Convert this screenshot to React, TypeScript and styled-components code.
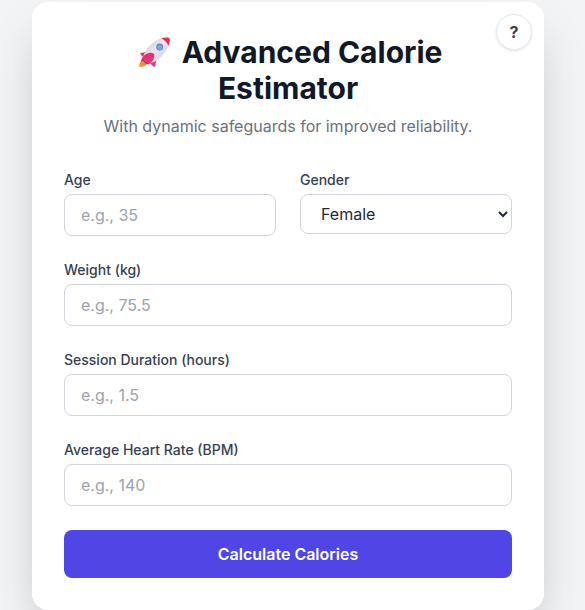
import React, { useState } from "react";
import styled, { createGlobalStyle } from "styled-components";

const GlobalStyle = createGlobalStyle`
  *, *::before, *::after { box-sizing: border-box; }
  body {
    margin: 0;
    background: #f3f4f6;
    font-family: Inter, sans-serif;
    font-size: 16px;
    line-height: 24px;
    color: #1f2937;
    overflow: hidden;
  }
`;

const Page = styled.main`
  height: 610px;
  padding: 2px 41px 0 32px;
  overflow: hidden;
`;

const Card = styled.section`
  position: relative;
  width: 512px;
  height: 608px;
  padding: 32px;
  background: #fff;
  border-radius: 16px;
  box-shadow: 0 25px 50px -12px rgba(0, 0, 0, 0.25);
`;

const HelpButton = styled.button`
  position: absolute;
  top: 12px;
  right: 12px;
  width: 36px;
  height: 36px;
  padding: 0;
  border: 1px solid #e5e7eb;
  border-radius: 50%;
  background: #fff;
  color: #374151;
  font: 700 16px/24px Inter, sans-serif;
  box-shadow: 0 1px 3px rgba(0, 0, 0, 0.1);
`;

const Header = styled.header`
  margin-bottom: 32px;
  text-align: center;
`;

const Title = styled.h1`
  margin: 0;
  font-size: 30px;
  line-height: 36px;
  font-weight: 700;
  color: #111827;
`;

const RocketIcon = styled.svg`
  width: 41px;
  height: 32px;
  vertical-align: -6px;
  margin-top: -4px;
`;

const Subtitle = styled.p`
  margin: 8px 0 0;
  color: #6b7280;
`;

const Form = styled.form`
  display: grid;
  gap: 24px;
`;

const Row = styled.div`
  display: grid;
  grid-template-columns: 1fr 1fr;
  gap: 24px;
  align-items: start;
`;

const Field = styled.label`
  display: flex;
  flex-direction: column;
  gap: 4px;
`;

const LabelText = styled.span`
  font-size: 14px;
  line-height: 20px;
  font-weight: 500;
  color: #374151;
`;

const Input = styled.input`
  width: 100%;
  height: 42px;
  padding: 8px 16px;
  border: 1px solid #d1d5db;
  border-radius: 8px;
  background: #fff;
  color: #1f2937;
  font: 400 16px/24px Inter, sans-serif;
  &::placeholder { color: #9ca3af; opacity: 1; }
`;

const Select = styled.select`
  width: 100%;
  height: 40px;
  padding: 8px 0 8px 16px;
  border: 1px solid #d1d5db;
  border-radius: 8px;
  background: #fff;
  color: #1f2937;
  font: 400 16px/24px Inter, sans-serif;
`;

const SubmitButton = styled.button`
  height: 48px;
  border: 0;
  border-radius: 8px;
  background: #4f46e5;
  color: #fff;
  font: 600 16px/24px Inter, sans-serif;
`;

function Rocket() {
  return (
    <RocketIcon viewBox="0 0 41 32" aria-label="Rocket">
      <defs>
        <linearGradient id="hull" x1="0.2" y1="0.2" x2="0.8" y2="0.8">
          <stop offset="0" stopColor="#d3d0d6" />
          <stop offset="0.45" stopColor="#eee6f0" />
          <stop offset="1" stopColor="#dccbe4" />
        </linearGradient>
        <linearGradient id="fin" x1="0" y1="0" x2="1" y2="1">
          <stop offset="0" stopColor="#dc3160" />
          <stop offset="1" stopColor="#f03585" />
        </linearGradient>
        <linearGradient id="flame" x1="1" y1="0" x2="0" y2="1">
          <stop offset="0" stopColor="#dd7436" />
          <stop offset="1" stopColor="#fba741" />
        </linearGradient>
      </defs>
      <path d="M9 23.300C6.500 23.500 5.200 25.800 5.100 29.200Q5.100 30 6 30C9.500 30 12.500 29 13 25.800Z" fill="url(#flame)" />
      <path d="M14.500 14.600L6.900 15.900Q5.600 16.400 6.600 17.300L9.500 20.500Z" fill="url(#fin)" />
      <path d="M22.500 21L21.300 28.800Q20.700 30.500 19.300 29.400L15.500 25.500Z" fill="url(#fin)" />
      <path d="M9.400 23C8 15 18.500 3.500 27.500 1.300C31 .4 34.500 .1 35.300 1C36.300 2 35.700 6 34.300 9.500C31.300 17 21.500 27 13.200 26.500Z" fill="url(#hull)" />
      <path d="M27.300 1.400C30.500 .4 34.500 .1 35.300 1C36.300 2 35.700 5.800 34.500 8.800C33.300 5.500 30.500 2.600 27.300 1.400Z" fill="#e23549" />
      <path d="M15.600 15.800C11.500 16.700 8.500 19.200 7 23.600Q7.200 25.200 9 24.300L11.600 23.500L11.600 26.200Q14.200 28.500 15.900 26.500C18.800 24.300 20.700 21.700 20.200 17.200Q18.500 15.400 15.600 15.800Z" fill="url(#fin)" />
      <path d="M9.200 23.300L12.900 26.500" stroke="#74435a" strokeWidth="1.200" strokeLinecap="round" />
      <circle cx="25.700" cy="10" r="3.500" fill="#6084b4" />
      <circle cx="25.800" cy="10.200" r="2.500" fill="#6faaf0" />
    </RocketIcon>
  );
}

const measurements = [
  { name: "weight", label: "Weight (kg)", placeholder: "e.g., 75.5" },
  { name: "duration", label: "Session Duration (hours)", placeholder: "e.g., 1.5" },
  { name: "heartRate", label: "Average Heart Rate (BPM)", placeholder: "e.g., 140" },
];

export default function App() {
  const [gender, setGender] = useState("female");
  return (
    <>
      <GlobalStyle />
      <Page>
        <Card>
          <HelpButton type="button">?</HelpButton>
          <Header>
            <Title><Rocket /> Advanced Calorie Estimator</Title>
            <Subtitle>With dynamic safeguards for improved reliability.</Subtitle>
          </Header>
          <Form onSubmit={(event) => event.preventDefault()}>
            <Row>
              <Field>
                <LabelText>Age</LabelText>
                <Input name="age" type="number" placeholder="e.g., 35" />
              </Field>
              <Field>
                <LabelText>Gender</LabelText>
                <Select value={gender} onChange={(event) => setGender(event.target.value)}>
                  <option value="female">Female</option>
                  <option value="male">Male</option>
                </Select>
              </Field>
            </Row>
            {measurements.map(({ name, label, placeholder }) => (
              <Field key={name}>
                <LabelText>{label}</LabelText>
                <Input name={name} type="number" placeholder={placeholder} />
              </Field>
            ))}
            <SubmitButton type="submit">Calculate Calories</SubmitButton>
          </Form>
        </Card>
      </Page>
    </>
  );
}
